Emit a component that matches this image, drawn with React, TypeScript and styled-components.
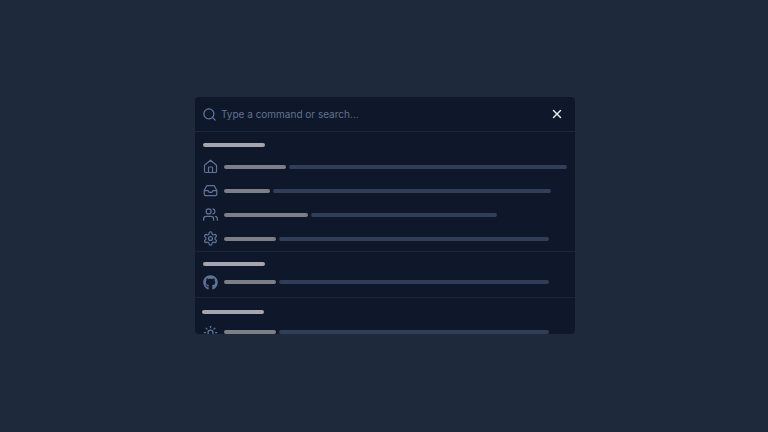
import React from "react";
import styled, { createGlobalStyle, css } from "styled-components";
import { Search, X, Sun } from "lucide-react";
import { FiInbox, FiUsers } from "react-icons/fi";
import { FaGithub } from "react-icons/fa";

const GlobalStyle = createGlobalStyle`
  *, *::before, *::after { box-sizing: border-box; }
  body {
    margin: 0;
    background: #1e293b;
    font-family: Inter, "Liberation Sans", sans-serif;
  }
`;

const Backdrop = styled.main`
  min-height: 100vh;
  padding: 97px 15px 16px 17px;
  background: #1e293b;
`;

const Palette = styled.div`
  width: 100%;
  max-width: 380px;
  margin: 0 auto;
  overflow: hidden;
  border-radius: 4px;
  background: #0f172a;
`;

const SearchBar = styled.div`
  display: flex;
  align-items: center;
  gap: 4px;
  height: 35px;
  padding: 0 11px 0 7px;
  border-bottom: 1px solid #1c273a;
  color: #64779a;
`;

const SearchInput = styled.input`
  flex: 1;
  min-width: 0;
  padding: 0;
  border: 0;
  outline: 0;
  background: transparent;
  color: #e2e8f0;
  font: 400 10px/16px Inter, "Liberation Sans", sans-serif;
  &::placeholder { color: #62738f; opacity: 1; }
`;

const CloseButton = styled.button`
  display: flex;
  padding: 0;
  border: 0;
  background: transparent;
  color: #e9eef5;
  cursor: pointer;
`;

const Results = styled.div`
  max-height: 202px;
  overflow: hidden;
`;

const Group = styled.section<{ $space?: "tight" | "loose" }>`
  padding: 11px 8px 0;
  & + & { border-top: 1px solid #1a2437; }
  ${({ $space }) => $space === "tight" && css`padding: 10px 8px 3px;`}
  ${({ $space }) => $space === "loose" && css`padding: 12px 8px 0;`}
`;

const Bar = styled.span<{ $width: number; $tone: "label" | "detail" }>`
  flex: 0 1 ${({ $width }) => $width}px;
  height: 4px;
  border-radius: 2px;
  background: ${({ $tone }) => ($tone === "label" ? "#7c7f87" : "#323d57")};
`;

const Heading = styled.div<{ $outdent?: boolean }>`
  width: 62px;
  height: 4px;
  margin-left: ${({ $outdent }) => ($outdent ? "-1px" : "0")};
  border-radius: 2px;
  background: #a4a5ae;
`;

const Items = styled.div<{ $gap?: number }>`
  margin-top: ${({ $gap = 8 }) => $gap}px;
`;

const Item = styled.button`
  display: flex;
  align-items: center;
  gap: 3px;
  width: 100%;
  height: 24px;
  padding: 0;
  border: 0;
  background: transparent;
  color: #607394;
  cursor: pointer;
`;

const IconSlot = styled.span<{ $align: "start" | "end" }>`
  display: flex;
  flex: none;
  align-items: flex-${({ $align }) => $align};
  justify-content: center;
  width: 15px;
  height: 16px;
  margin-right: 3px;
`;

function HomeIcon() {
  return (
    <svg width="15" height="15" viewBox="0 0 15 15" fill="none" stroke="currentColor" strokeWidth="1.2" strokeLinecap="round" strokeLinejoin="round" aria-hidden="true">
      <path d="M1.5 6.2 7.5 1.2l6 5v6.1a1.2 1.2 0 0 1-1.2 1.2H2.7a1.2 1.2 0 0 1-1.2-1.2z" />
      <path d="M5.5 13.5V8.7a.7.7 0 0 1 .7-.7h2.6a.7.7 0 0 1 .7.7v4.8" />
    </svg>
  );
}

function GearIcon() {
  return (
    <svg width="15" height="15" viewBox="0.5 0.5 23 23" fill="none" stroke="currentColor" strokeWidth="1.9" strokeLinecap="round" strokeLinejoin="round" aria-hidden="true">
      <path d="M12.22 2h-.44a2 2 0 0 0-2 2v.18a2 2 0 0 1-1 1.73l-.43.25a2 2 0 0 1-2 0l-.15-.08a2 2 0 0 0-2.73.73l-.22.38a2 2 0 0 0 .73 2.73l.15.1a2 2 0 0 1 1 1.72v.51a2 2 0 0 1-1 1.74l-.15.09a2 2 0 0 0-.73 2.73l.22.38a2 2 0 0 0 2.73.73l.15-.08a2 2 0 0 1 2 0l.43.25a2 2 0 0 1 1 1.73V20a2 2 0 0 0 2 2h.44a2 2 0 0 0 2-2v-.18a2 2 0 0 1 1-1.73l.43-.25a2 2 0 0 1 2 0l.15.08a2 2 0 0 0 2.73-.73l.22-.39a2 2 0 0 0-.73-2.73l-.15-.08a2 2 0 0 1-1-1.74v-.5a2 2 0 0 1 1-1.74l.15-.09a2 2 0 0 0 .73-2.73l-.22-.38a2 2 0 0 0-2.73-.73l-.15.08a2 2 0 0 1-2 0l-.43-.25a2 2 0 0 1-1-1.73V4a2 2 0 0 0-2-2z" />
      <circle cx="12" cy="12" r="3" />
    </svg>
  );
}

interface CommandProps {
  name: string;
  icon: React.ReactNode;
  label: number;
  detail: number;
  align?: "start" | "end";
}

function Command({ name, icon, label, detail, align = "start" }: CommandProps) {
  return (
    <Item type="button" aria-label={name}>
      <IconSlot $align={align}>{icon}</IconSlot>
      <Bar $width={label} $tone="label" />
      <Bar $width={detail} $tone="detail" />
    </Item>
  );
}

export default function App() {
  return (
    <>
      <GlobalStyle />
      <Backdrop>
        <Palette role="dialog" aria-label="Command palette">
          <SearchBar>
            <Search size={15} strokeWidth={2} aria-hidden="true" />
            <SearchInput type="text" aria-label="Search commands" placeholder="Type a command or search…" />
            <CloseButton type="button" aria-label="Close">
              <X size={14} strokeWidth={2.5} />
            </CloseButton>
          </SearchBar>
          <Results>
            <Group>
              <Heading />
              <Items>
                <Command name="Home" icon={<HomeIcon />} label={62} detail={278} />
                <Command name="Inbox" icon={<FiInbox size={15} />} label={46} detail={278} />
                <Command name="Users" icon={<FiUsers size={15} />} label={84} detail={186} />
                <Command name="Settings" icon={<GearIcon />} label={52} detail={270} />
              </Items>
            </Group>
            <Group $space="tight">
              <Heading />
              <Items $gap={4}>
                <Command name="GitHub" icon={<FaGithub size={15} />} label={52} detail={270} align="end" />
              </Items>
            </Group>
            <Group $space="loose">
              <Heading $outdent />
              <Items $gap={6}>
                <Command name="Theme" icon={<Sun size={15} />} label={52} detail={270} align="end" />
              </Items>
            </Group>
          </Results>
        </Palette>
      </Backdrop>
    </>
  );
}
